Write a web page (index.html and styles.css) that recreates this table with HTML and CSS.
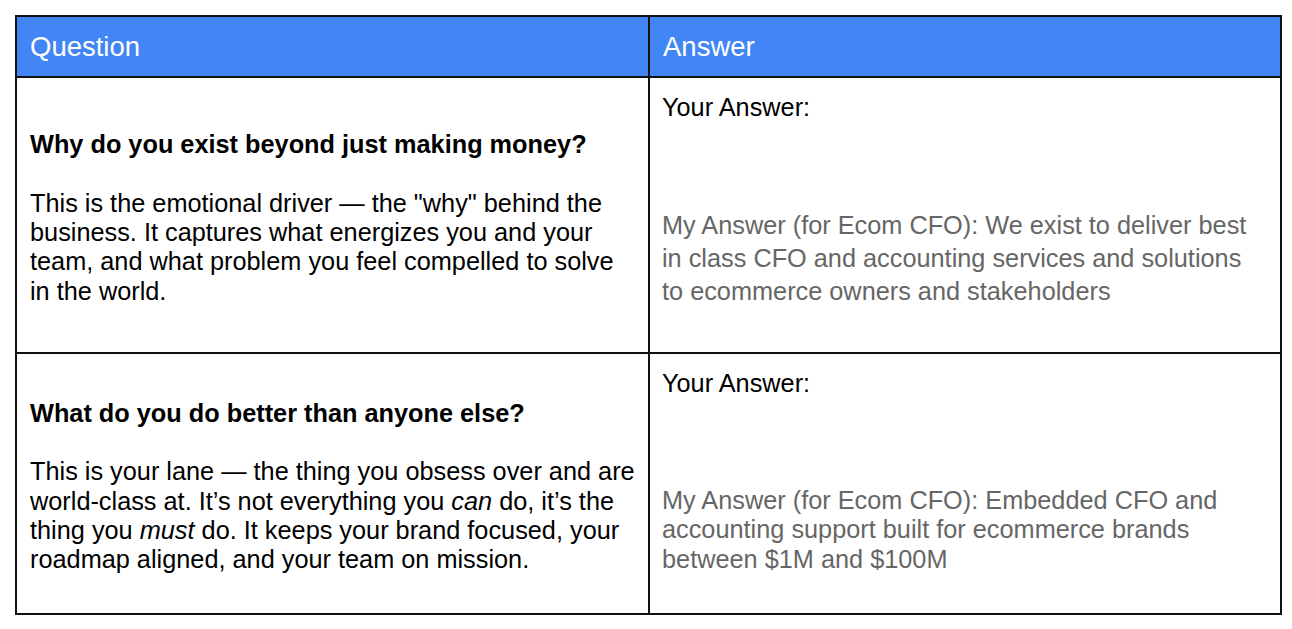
FILE: index.html
```html
<!DOCTYPE html>
<html>
<head>
<meta charset="utf-8">
<link rel="stylesheet" href="styles.css">
</head>
<body>
<div class="qa-table">
  <div class="cell head">Question</div>
  <div class="cell head">Answer</div>

  <div class="cell q row1">
    <div class="q-body">
      <p class="q-title">Why do you exist beyond just making money?</p>
      <p class="q-text">This is the emotional driver — the "why" behind the business. It captures what energizes you and your team, and what problem you feel compelled to solve in the world.</p>
    </div>
  </div>
  <div class="cell a row1">
    <p class="a-label">Your Answer:</p>
    <p class="a-text loose">My Answer (for Ecom CFO): We exist to deliver best in class CFO and accounting services and solutions to ecommerce owners and stakeholders</p>
  </div>

  <div class="cell q row2">
    <div class="q-body">
      <p class="q-title">What do you do better than anyone else?</p>
      <p class="q-text">This is your lane — the thing you obsess over and are world-class at. It’s not everything you <em>can</em> do, it’s the thing you <em>must</em> do. It keeps your brand focused, your roadmap aligned, and your team on mission.</p>
    </div>
  </div>
  <div class="cell a row2">
    <p class="a-label">Your Answer:</p>
    <p class="a-text">My Answer (for Ecom CFO): Embedded CFO and accounting support built for ecommerce brands between $1M and $100M</p>
  </div>
</div>
</body>
</html>
```

FILE: styles.css
```css
* { box-sizing: border-box; }

html, body {
  margin: 0;
  padding: 0;
  background: #ffffff;
}

body {
  padding: 15px 0 0 15px;
  font-family: "Liberation Sans", Arial, sans-serif;
  color: #000;
}

.qa-table {
  width: 1267px;
  display: grid;
  grid-template-columns: 631px 630px;
  grid-template-rows: 59px 274px 259px;
  gap: 2px;
  background: #111;
  border: 2px solid #111;
}

.cell {
  background: #fff;
  padding: 0 13px;
}

.cell p {
  margin: 0;
}

.head {
  background: #4285f4;
  color: #fff;
  font-size: 27.5px;
  display: flex;
  align-items: center;
  padding-top: 1px;
}

.q {
  display: flex;
  align-items: center;
  padding-top: 6px;
}

.q-body {
  font-size: 25.3px;
  line-height: 29.3px;
}

.q-title {
  font-weight: bold;
  margin-bottom: 29.3px !important;
}

.q-text em {
  font-style: italic;
}

.a {
  padding: 15px 12px 0 12px;
  font-size: 25.3px;
  line-height: 29.3px;
}

.a-label {
  margin-bottom: 87.9px !important;
}

.a-text {
  color: #666;
}

.a-text.loose {
  line-height: 33px;
  margin-top: -1px !important;
}
```
